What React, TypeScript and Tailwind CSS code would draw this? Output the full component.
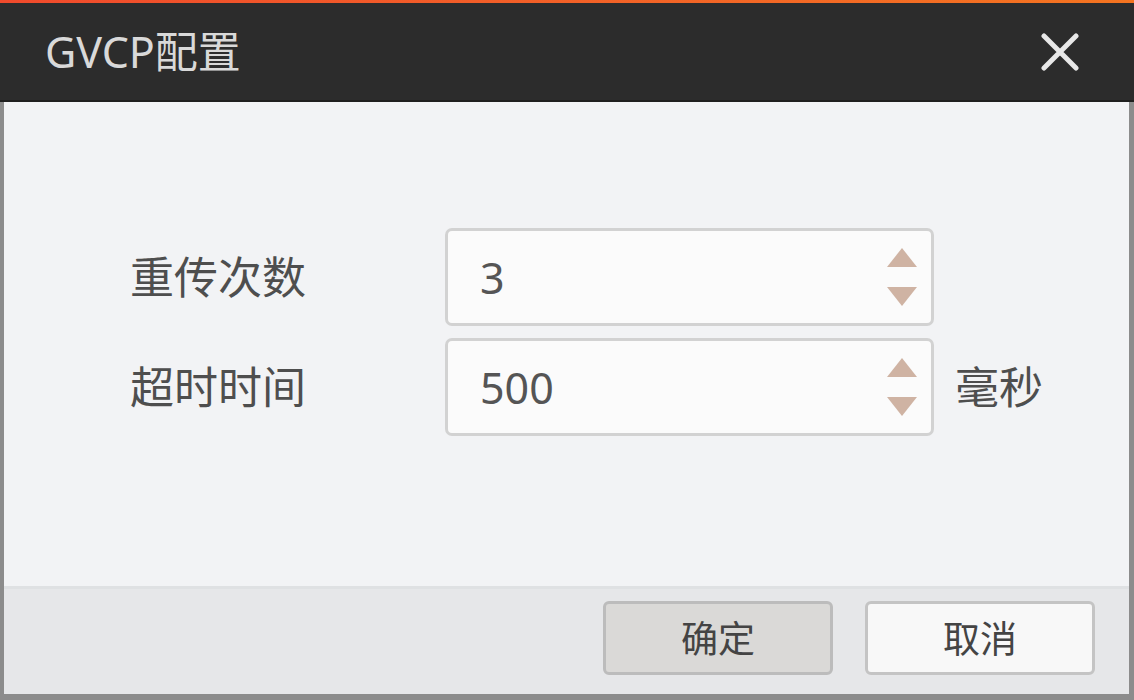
import React from "react";

const font = { fontFamily: '"Noto Sans", "Noto Sans CJK SC", sans-serif' };

function Spin() {
  return (
    <div className="flex flex-col items-center gap-[20px] mr-[14px]">
      <svg width="30" height="19" viewBox="0 0 30 19">
        <polygon points="15,0 30,19 0,19" fill="#cfb3a3" />
      </svg>
      <svg width="30" height="19" viewBox="0 0 30 19">
        <polygon points="0,0 30,0 15,19" fill="#cfb3a3" />
      </svg>
    </div>
  );
}

function Field({ label, value, unit }: { label: string; value: string; unit?: string }) {
  return (
    <div className="flex items-center">
      <div className="w-[315px] text-[44px] text-[#4e4e4e] leading-none">{label}</div>
      <div className="w-[489px] h-[98px] rounded-[7px] border-[3px] border-[#d2d2d2] bg-[#fbfbfb] flex items-center justify-between pl-[32px]">
        <span className="text-[43px] text-[#555555] leading-none">{value}</span>
        <Spin />
      </div>
      {unit && <div className="ml-[21px] text-[44px] text-[#4e4e4e] leading-none">{unit}</div>}
    </div>
  );
}

export default function App() {
  return (
    <div className="w-[1134px] h-[700px] flex flex-col bg-[#8c8c8c]" style={font}>
      <div className="h-[3px] bg-gradient-to-r from-[#f04a2c] to-[#f47420]" />
      <div className="h-[99px] bg-[#2c2c2c] border-b-2 border-[#1f1f1f] flex items-center justify-between pl-[45px] pr-[55px]">
        <span className="text-[43px] text-[#d9d9d9] leading-none">GVCP配置</span>
        <svg width="38" height="38" viewBox="0 0 38 38">
          <path d="M3 3 L35 35 M35 3 L3 35" stroke="#e8e8e8" strokeWidth="5" strokeLinecap="round" />
        </svg>
      </div>
      <div className="flex-1 flex flex-col ml-[4px] mr-[5px] mb-[6px] bg-[#f2f3f5]">
        <div className="flex-1 flex flex-col gap-[12px] pl-[126px] pt-[126px]">
          <Field label="重传次数" value="3" />
          <Field label="超时时间" value="500" unit="毫秒" />
        </div>
        <div className="h-[108px] bg-[#e6e7e9] border-t-[3px] border-[#dfe1e3] flex items-start justify-end gap-[32px] pt-[12px] pr-[34px]">
          <button className="w-[230px] h-[74px] rounded-[6px] border-[3px] border-[#bcbcbc] bg-[#dad9d7] text-[37px] text-[#444] leading-none">确定</button>
          <button className="w-[230px] h-[74px] rounded-[6px] border-[3px] border-[#c4c4c4] bg-[#f8f8f8] text-[37px] text-[#444] leading-none">取消</button>
        </div>
      </div>
    </div>
  );
}
